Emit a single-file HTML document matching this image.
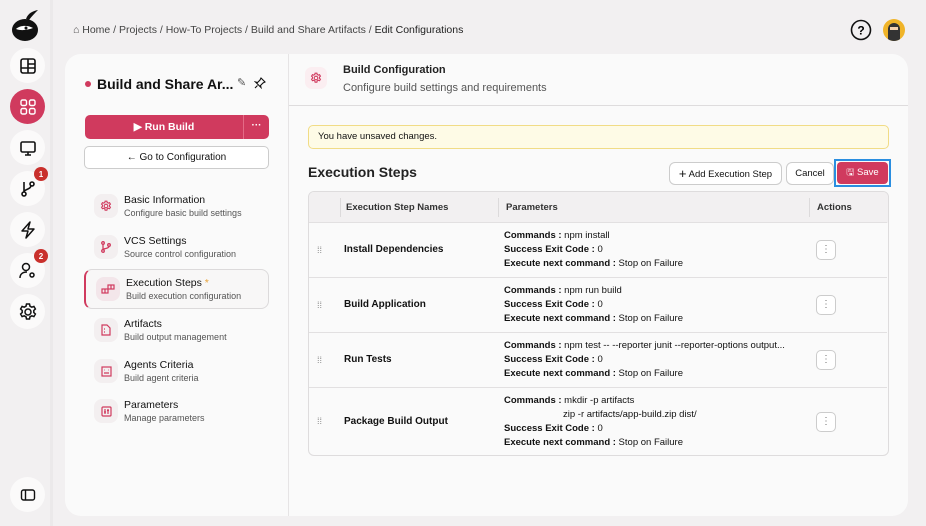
<!DOCTYPE html>
<html><head><meta charset="utf-8"><style>
*{box-sizing:border-box;margin:0;padding:0}
body{width:926px;height:526px;background:#f2f0f1;font-family:"Liberation Sans",sans-serif;color:#111;position:relative;overflow:hidden;font-size:11px}
.abs{position:absolute}
.sb{position:absolute;left:10px;width:35px;height:35px;border-radius:50%;background:#fbfafa;display:flex;align-items:center;justify-content:center}
.badge{position:absolute;right:-3px;top:-4px;width:14px;height:14px;border-radius:50%;background:#c9302c;color:#fff;font-size:8px;font-weight:bold;display:flex;align-items:center;justify-content:center}
.nav{position:absolute;left:94px;display:flex;align-items:center}
.nav .ic{width:24px;height:24px;border-radius:8px;background:#f3eff0;display:flex;align-items:center;justify-content:center;margin-right:6px}
.nav b{font-weight:normal;font-size:10.5px;color:#111;display:block}
.nav span{font-size:9px;color:#555;display:block;margin-top:2px}
.row{position:absolute;left:309px;width:578px;border-top:1px solid #e2e0e1}
.row .dr{position:absolute;left:8px;color:#888;font-size:9px}
.row .nm{position:absolute;left:35px;font-weight:bold;font-size:10px}
.row .pm{position:absolute;left:195px;font-size:9.5px;line-height:14px}
.row .act{position:absolute;left:507px;width:20px;height:20px;border:1px solid #ccc;border-radius:5px;background:#fff;color:#777;font-size:10px;text-align:center;line-height:18px}
</style></head><body>
<div class="abs" style="left:50px;top:0;width:3px;height:526px;background:#ebe9ea"></div>
<svg class="abs" style="left:10px;top:8px" width="32" height="34" viewBox="0 0 32 34"><ellipse cx="15" cy="22" rx="13" ry="11" fill="#111"/><path d="M16 11 C18 5 23 3 28 2 C25 5 22 8 19 12Z" fill="#111"/><path d="M6 21 C10 17 18 17 23 20 C18 22 11 23 6 21Z" fill="#fff"/><circle cx="16" cy="20" r="1.5" fill="#111"/></svg>
<div class="sb" style="top:48px"><svg width="18" height="18" viewBox="0 0 18 18" fill="none" stroke="#111" stroke-width="1.6"><rect x="2" y="2" width="14" height="14" rx="2"/><path d="M2 11H16M9 2V16M9 7H16"/></svg></div>
<div class="sb" style="top:89px;background:#d03a5e"><svg width="18" height="18" viewBox="0 0 18 18" fill="none" stroke="#fff" stroke-width="1.4"><rect x="2" y="2" width="5.5" height="5.5" rx="1.5"/><rect x="10.5" y="2" width="5.5" height="5.5" rx="1.5"/><rect x="2" y="10.5" width="5.5" height="5.5" rx="1.5"/><rect x="10.5" y="10.5" width="5.5" height="5.5" rx="1.5"/></svg></div>
<div class="sb" style="top:130px"><svg width="18" height="18" viewBox="0 0 18 18" fill="none" stroke="#111" stroke-width="1.6"><rect x="2" y="3" width="14" height="10" rx="1.5"/><path d="M9 13V16M6 16H12"/></svg></div>
<div class="sb" style="top:171px"><svg width="18" height="18" viewBox="0 0 18 18" fill="none" stroke="#111" stroke-width="1.6"><circle cx="5" cy="14" r="2"/><path d="M5 12V2M5 12C5 9 12 10 12 5"/><circle cx="13" cy="4" r="2"/></svg><div class="badge">1</div></div>
<div class="sb" style="top:212px"><svg width="18" height="18" viewBox="0 0 18 18" fill="none" stroke="#111" stroke-width="1.5" stroke-linejoin="round"><path d="M11 1L3 10H9L7 17L15 8H9Z"/></svg></div>
<div class="sb" style="top:253px"><svg width="18" height="18" viewBox="0 0 18 18" fill="none" stroke="#111" stroke-width="1.5"><circle cx="7" cy="5" r="3.5"/><path d="M1 16C1 12 4 10 8 10"/><circle cx="13" cy="13" r="2"/></svg><div class="badge">2</div></div>
<div class="sb" style="top:294px"><svg width="20" height="20" viewBox="0 0 20 20" fill="none" stroke="#111" stroke-width="1.5"><circle cx="10" cy="10" r="3"/><path d="M8.5 2h3l.5 2.2 1.8 1 2.1-.8 1.5 2.6-1.6 1.5v2l1.6 1.5-1.5 2.6-2.1-.8-1.8 1-.5 2.2h-3l-.5-2.2-1.8-1-2.1.8-1.5-2.6 1.6-1.5v-2L2.6 7l1.5-2.6 2.1.8 1.800-1z"/></svg></div>
<div class="sb" style="top:477px"><svg width="16" height="14" viewBox="0 0 16 14" fill="none" stroke="#111" stroke-width="1.4"><rect x="1.5" y="2" width="13" height="10" rx="2"/><path d="M5.5 2V12"/></svg></div>
<div class="abs" style="left:73px;top:24px;font-size:10.5px;color:#444">⌂ Home / Projects / How-To Projects / Build and Share Artifacts / <span style="color:#222">Edit Configurations</span></div>
<svg class="abs" style="left:850px;top:19px" width="22" height="22" viewBox="0 0 22 22"><circle cx="11" cy="11" r="9.5" fill="none" stroke="#111" stroke-width="1.6"/><text x="11" y="15.5" font-size="12" font-weight="bold" text-anchor="middle" font-family="Liberation Sans">?</text></svg>
<div class="abs" style="left:883px;top:19px;width:22px;height:22px;border-radius:50%;background:#f0b429;overflow:hidden"><div style="position:absolute;left:5px;top:4px;width:12px;height:18px;border-radius:6px 6px 2px 2px;background:#333"></div><div style="position:absolute;left:7px;top:8px;width:8px;height:3px;background:#f3d1b0"></div></div>
<div class="abs" style="left:65px;top:54px;width:843px;height:462px;background:#fafafa;border-radius:16px;overflow:hidden">
<div class="abs" style="left:223px;top:0;width:1px;height:462px;background:#e6e4e5"></div>
<div class="abs" style="left:224px;top:51px;width:619px;height:1px;background:#dedcdd"></div>
</div>
<div class="abs" style="left:85px;top:81px;width:6px;height:6px;border-radius:50%;background:#d03a5e"></div>
<div class="abs" style="left:97px;top:76px;font-size:14px;font-weight:bold">Build and Share Ar...</div>
<div class="abs" style="left:237px;top:76px;font-size:11px;color:#555">✎</div>
<svg class="abs" style="left:254px;top:77px" width="12" height="12" viewBox="0 0 12 12" fill="none" stroke="#111" stroke-width="1.1"><path d="M7 1L11 5L9 6L6.5 8.5L7 10.5L1.5 5L3.5 5.5L6 3Z M3.5 8.5L1 11"/></svg>
<div class="abs" style="left:85px;top:115px;width:184px;height:24px;background:#d03a5e;border-radius:5px;color:#fff;font-weight:bold;font-size:10.5px">
<div style="position:absolute;left:0;width:158px;text-align:center;line-height:24px">▶ Run Build</div>
<div style="position:absolute;left:158px;top:0;width:1px;height:24px;background:#e46a86"></div>
<div style="position:absolute;left:159px;width:25px;text-align:center;line-height:22px;font-size:10px">···</div></div>
<div class="abs" style="left:84px;top:146px;width:185px;height:23px;border:1px solid #ccc;border-radius:5px;background:#fff;text-align:center;line-height:21px;font-size:10px">← Go to Configuration</div>
<div class="abs" style="left:84px;top:269px;width:185px;height:40px;border:1px solid #dcdadb;border-left:2px solid #d03a5e;border-radius:8px;background:#f8f7f7"></div>
<div class="nav" style="top:194px"><div class="ic"><svg width="12" height="12" viewBox="0 0 20 20" fill="none" stroke="#d03a5e" stroke-width="1.8"><circle cx="10" cy="10" r="3"/><path d="M8.5 2h3l.5 2.2 1.8 1 2.1-.8 1.5 2.6-1.6 1.5v2l1.6 1.5-1.5 2.6-2.1-.8-1.8 1-.5 2.2h-3l-.5-2.2-1.8-1-2.1.8-1.5-2.6 1.6-1.5v-2L2.6 7l1.5-2.6 2.1.8 1.8-1z"/></svg></div><div><b>Basic Information</b><span>Configure basic build settings</span></div></div>
<div class="nav" style="top:235px"><div class="ic"><svg width="12" height="12" viewBox="0 0 12 12" fill="none" stroke="#d03a5e" stroke-width="1.3"><circle cx="3" cy="10" r="1.3"/><circle cx="3" cy="2" r="1.3"/><circle cx="9" cy="4" r="1.3"/><path d="M3 3.3V8.7M9 5.3C9 8 4 7 3 8.7"/></svg></div><div><b>VCS Settings</b><span>Source control configuration</span></div></div>
<div class="nav" style="top:277px;left:96px"><div class="ic" style="background:#f3e6ea"><svg width="14" height="10" viewBox="0 0 14 10" fill="none" stroke="#d03a5e" stroke-width="1.2"><rect x="1" y="5" width="6" height="4"/><rect x="7" y="1" width="6" height="4"/><path d="M4 5V9M10 1V5"/></svg></div><div><b>Execution Steps <i style="color:#e8a33a;font-style:normal">*</i></b><span>Build execution configuration</span></div></div>
<div class="nav" style="top:318px"><div class="ic"><svg width="10" height="12" viewBox="0 0 10 12" fill="none" stroke="#d03a5e" stroke-width="1.2"><path d="M1 1H6L9 4V11H1Z"/><path d="M3 5H4M3 8H4"/></svg></div><div><b>Artifacts</b><span>Build output management</span></div></div>
<div class="nav" style="top:359px"><div class="ic"><svg width="11" height="11" viewBox="0 0 11 11" fill="none" stroke="#d03a5e" stroke-width="1.2"><rect x="1" y="1" width="9" height="9"/><path d="M3 7H8M3.5 4H4M7 4H7.5"/></svg></div><div><b>Agents Criteria</b><span>Build agent criteria</span></div></div>
<div class="nav" style="top:399px"><div class="ic"><svg width="11" height="11" viewBox="0 0 11 11" fill="none" stroke="#d03a5e" stroke-width="1.2"><rect x="1" y="1" width="9" height="9" rx="1"/><path d="M4 3V8M7 3V8M3 6H5M6 4.5H8"/></svg></div><div><b>Parameters</b><span>Manage parameters</span></div></div>
<div class="abs" style="left:305px;top:67px;width:22px;height:22px;border-radius:7px;background:#fbeef1;display:flex;align-items:center;justify-content:center"><svg width="12" height="12" viewBox="0 0 20 20" fill="none" stroke="#d03a5e" stroke-width="1.8"><circle cx="10" cy="10" r="3"/><path d="M8.5 2h3l.5 2.2 1.8 1 2.1-.8 1.5 2.6-1.6 1.5v2l1.6 1.5-1.5 2.6-2.1-.8-1.8 1-.5 2.2h-3l-.5-2.2-1.8-1-2.1.8-1.5-2.6 1.6-1.5v-2L2.6 7l1.5-2.6 2.1.8 1.8-1z"/></svg></div>
<div class="abs" style="left:343px;top:64px;font-size:11px;font-weight:bold;color:#222">Build Configuration</div>
<div class="abs" style="left:343px;top:82px;font-size:11px;color:#555">Configure build settings and requirements</div>
<div class="abs" style="left:308px;top:125px;width:581px;height:24px;background:#fefbe6;border:1px solid #f1dc86;border-radius:5px;font-size:9.5px;line-height:22px;padding-left:9px">You have unsaved changes.</div>
<div class="abs" style="left:308px;top:164px;font-size:14px;font-weight:bold;color:#222">Execution Steps</div>
<div class="abs" style="left:669px;top:162px;width:113px;height:23px;border:1px solid #ccc;border-radius:6px;background:#fff;font-size:9.5px;text-align:center;line-height:21px"><span style="font-size:13px;vertical-align:-1px">+</span> Add Execution Step</div>
<div class="abs" style="left:786px;top:162px;width:48px;height:23px;border:1px solid #ccc;border-radius:6px;background:#fff;font-size:9.5px;text-align:center;line-height:21px">Cancel</div>
<div class="abs" style="left:834px;top:159px;width:57px;height:28px;border:2px solid #2a8ee0;padding:1px"><div style="width:100%;height:100%;background:#d03a5e;border-radius:4px;color:#fff;font-size:9.5px;text-align:center;line-height:21px">🖫 Save</div></div>
<div class="abs" style="left:308px;top:191px;width:581px;height:265px;border:1px solid #dedcdd;border-radius:6px;background:#fafafa;overflow:hidden">
<div style="position:absolute;left:0;top:0;width:100%;height:31px;background:#f2f0f1"></div>
<div style="position:absolute;left:31px;top:6px;width:1px;height:19px;background:#dcdadb"></div>
<div style="position:absolute;left:189px;top:6px;width:1px;height:19px;background:#dcdadb"></div>
<div style="position:absolute;left:500px;top:6px;width:1px;height:19px;background:#dcdadb"></div>
<div style="position:absolute;left:37px;top:10px;font-size:9.5px;font-weight:bold;color:#333">Execution Step Names</div>
<div style="position:absolute;left:197px;top:10px;font-size:9.5px;font-weight:bold;color:#333">Parameters</div>
<div style="position:absolute;left:508px;top:10px;font-size:9.5px;font-weight:bold;color:#333">Actions</div>
</div>
<div class="row" style="top:222px;height:55px"><div class="dr" style="top:22px">⁞⁞</div><div class="nm" style="top:21px">Install Dependencies</div><div class="pm" style="top:6px"><b>Commands :</b> npm install<br><b>Success Exit Code :</b> 0<br><b>Execute next command :</b> Stop on Failure</div><div class="act" style="top:17px">⋮</div></div>
<div class="row" style="top:277px;height:55px"><div class="dr" style="top:22px">⁞⁞</div><div class="nm" style="top:21px">Build Application</div><div class="pm" style="top:6px"><b>Commands :</b> npm run build<br><b>Success Exit Code :</b> 0<br><b>Execute next command :</b> Stop on Failure</div><div class="act" style="top:17px">⋮</div></div>
<div class="row" style="top:332px;height:55px"><div class="dr" style="top:22px">⁞⁞</div><div class="nm" style="top:21px">Run Tests</div><div class="pm" style="top:6px"><b>Commands :</b> npm test -- --reporter junit --reporter-options output...<br><b>Success Exit Code :</b> 0<br><b>Execute next command :</b> Stop on Failure</div><div class="act" style="top:17px">⋮</div></div>
<div class="row" style="top:387px;height:68px"><div class="dr" style="top:28px">⁞⁞</div><div class="nm" style="top:28px">Package Build Output</div><div class="pm" style="top:6px"><b>Commands :</b> mkdir -p artifacts<br><span style="padding-left:59px">zip -r artifacts/app-build.zip dist/</span><br><b>Success Exit Code :</b> 0<br><b>Execute next command :</b> Stop on Failure</div><div class="act" style="top:24px">⋮</div></div>
</body></html>
